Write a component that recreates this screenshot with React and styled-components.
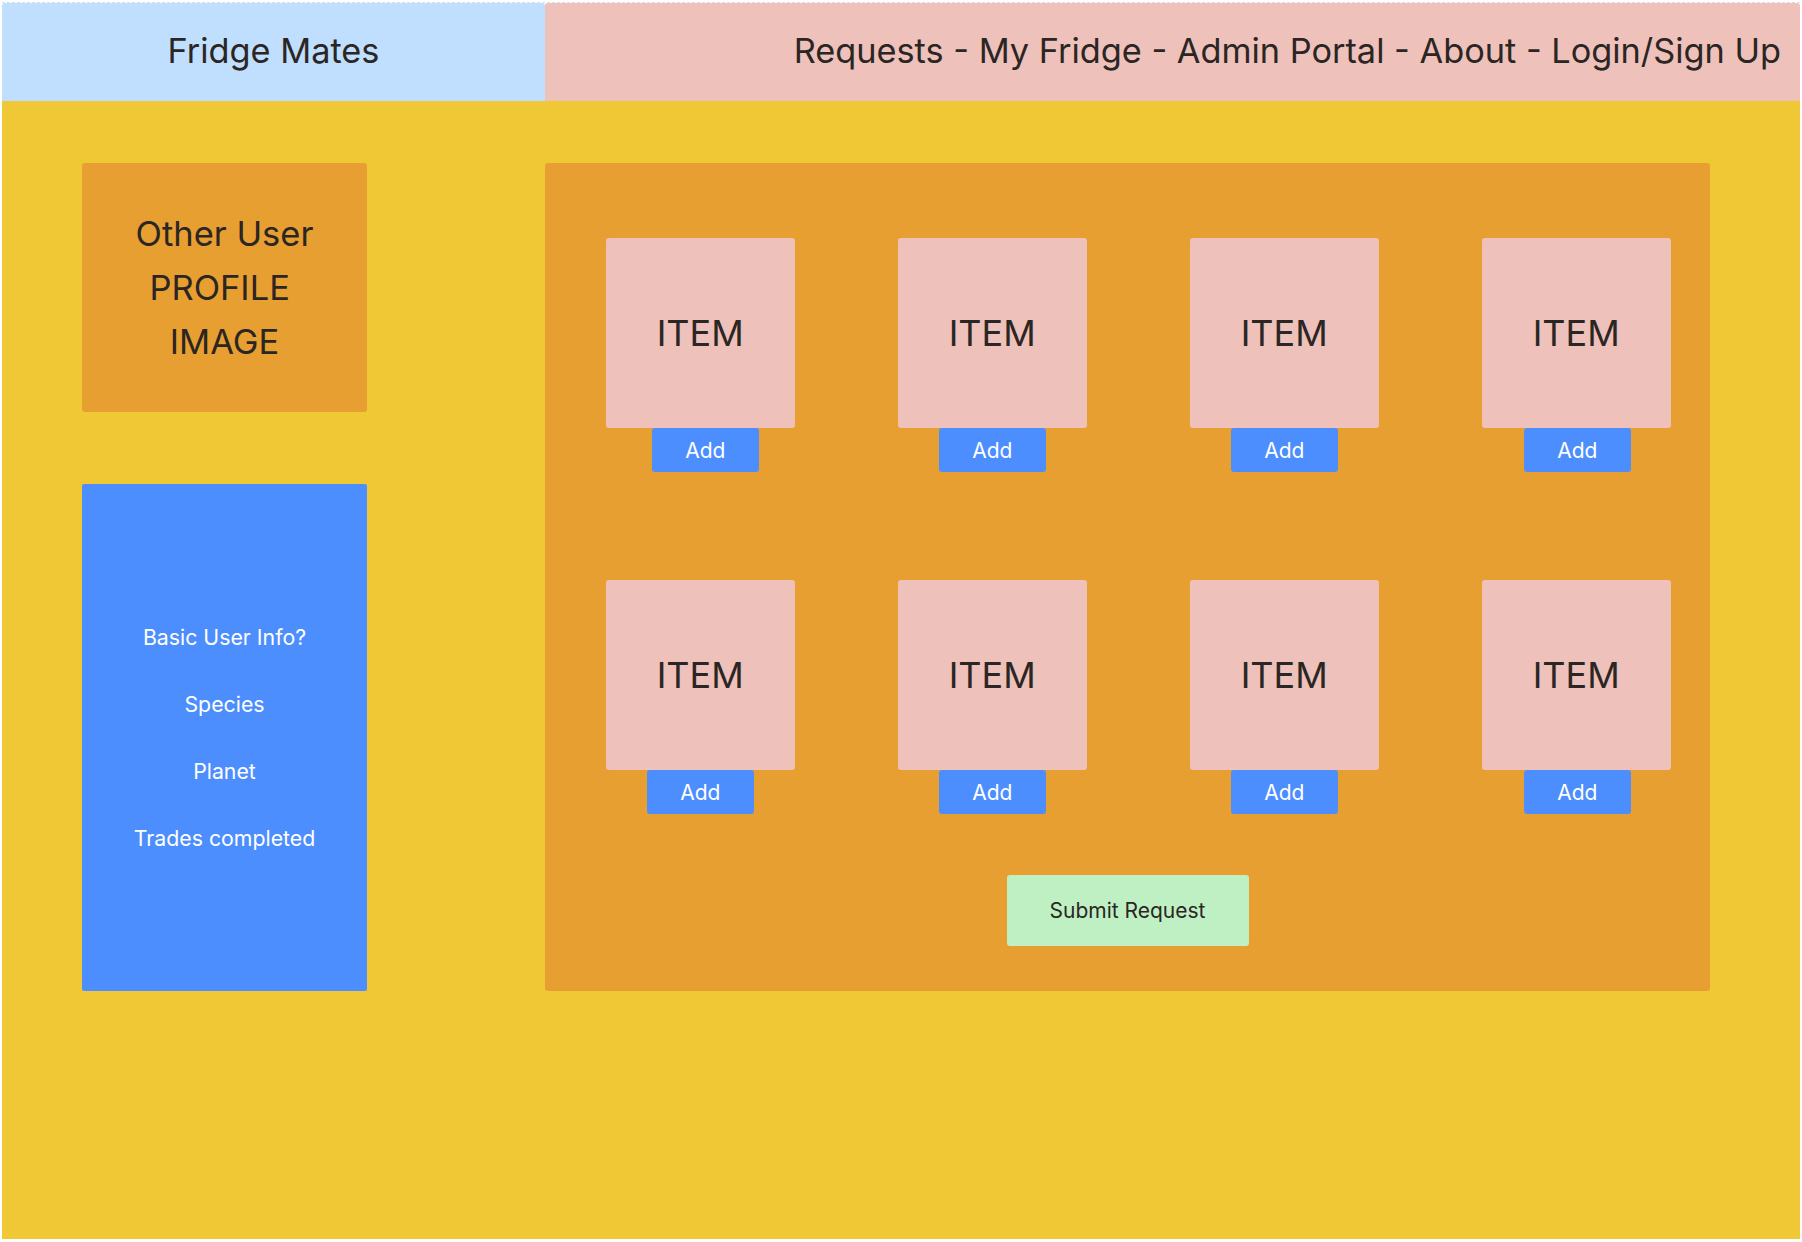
import styled, { createGlobalStyle } from 'styled-components';

const GlobalStyle = createGlobalStyle`
	html, body {
		margin: 0;
		padding: 0;
		background: #ffffff;
	}
	body {
		font-family: Inter, "Noto Sans", sans-serif;
		color: #2b2623;
	}
`;

const Frame = styled.div`
	margin: 2px;
	width: 1798px;
	height: 1237px;
	display: flex;
	flex-direction: column;
	border-top: 1px dashed #d8dde6;
	box-sizing: border-box;
`;

const Header = styled.header`
	height: 98px;
	display: flex;
`;

const Brand = styled.div`
	width: 543px;
	background: #c0defd;
	border-radius: 3px 3px 0 0;
	display: flex;
	align-items: center;
	justify-content: center;
	padding-bottom: 3px;
	box-sizing: border-box;
	font-size: 34.3px;
`;

const Nav = styled.nav`
	flex: 1;
	background: #eec1bb;
	border-radius: 3px 3px 0 0;
	display: flex;
	align-items: center;
	justify-content: flex-end;
	padding: 0 19px 3px 0;
	font-size: 34.3px;
`;

const Body = styled.main`
	flex: 1;
	background: #f0c835;
	display: flex;
	align-items: flex-start;
	padding: 62px 0 0 80px;
	gap: 178px;
`;

const Side = styled.aside`
	width: 285px;
	display: flex;
	flex-direction: column;
	gap: 72px;
`;

const ProfileImage = styled.div`
	height: 249px;
	background: #e89f31;
	border-radius: 3px;
	display: flex;
	align-items: center;
	justify-content: center;
	text-align: center;
	font-size: 34.5px;
	line-height: 54px;
`;

const InfoCard = styled.div`
	height: 507px;
	background: #4c8efe;
	border-radius: 2px;
	color: #ffffff;
	display: flex;
	flex-direction: column;
	align-items: center;
	justify-content: center;
	gap: 43px;
	font-size: 21.3px;
	line-height: 24px;
`;

const Panel = styled.section`
	width: 1165px;
	height: 828px;
	box-sizing: border-box;
	background: #e89f31;
	border-radius: 3px;
	padding: 75px 40px 0 61px;
	display: flex;
	flex-direction: column;
`;

const Grid = styled.div`
	display: grid;
	grid-template-columns: repeat(4, 188.5px);
	column-gap: 103.5px;
	row-gap: 108px;
`;

const Slot = styled.div`
	display: flex;
	flex-direction: column;
	align-items: center;
`;

const ItemCard = styled.div`
	width: 188.5px;
	height: 190px;
	background: #eec1bb;
	border-radius: 3px;
	display: flex;
	align-items: center;
	justify-content: center;
	font-size: 36px;
`;

const AddButton = styled.button`
	width: 107px;
	height: 44px;
	margin-left: ${(p) => p.$shift || 0}px;
	border: none;
	border-radius: 3px;
	background: #4c8efe;
	color: #ffffff;
	font-family: inherit;
	font-size: 21px;
	cursor: pointer;
`;

const SubmitButton = styled.button`
	align-self: center;
	margin: 61px 0 0 -21px;
	width: 242px;
	height: 71px;
	border: none;
	border-radius: 3px;
	background: #bff0c3;
	color: #2b2623;
	font-family: inherit;
	font-size: 21px;
	cursor: pointer;
`;

const shifts = [10, 0, 0, 2, 0, 0, 0, 2];

export default function App() {
	return (
		<>
			<GlobalStyle />
			<Frame>
				<Header>
					<Brand>Fridge Mates</Brand>
					<Nav>Requests - My Fridge - Admin Portal - About - Login/Sign Up</Nav>
				</Header>
				<Body>
					<Side>
						<ProfileImage>
							Other User
							<br />
							PROFILE&nbsp;
							<br />
							IMAGE
						</ProfileImage>
						<InfoCard>
							<div>Basic User Info?</div>
							<div>Species</div>
							<div>Planet</div>
							<div>Trades completed</div>
						</InfoCard>
					</Side>
					<Panel>
						<Grid>
							{shifts.map((shift, i) => (
								<Slot key={i}>
									<ItemCard>ITEM</ItemCard>
									<AddButton $shift={shift}>Add</AddButton>
								</Slot>
							))}
						</Grid>
						<SubmitButton>Submit Request</SubmitButton>
					</Panel>
				</Body>
			</Frame>
		</>
	);
}
